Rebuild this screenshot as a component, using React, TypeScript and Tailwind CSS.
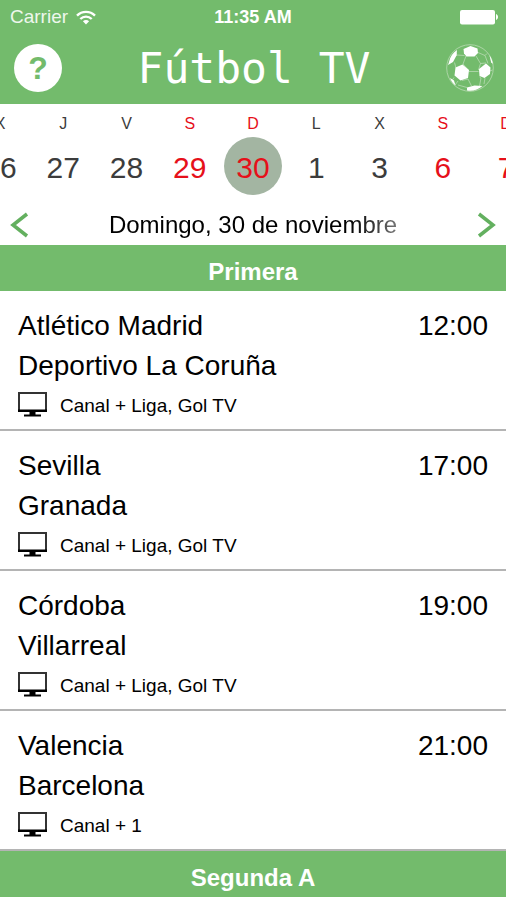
type Day = { letter: string; number: string; weekend?: boolean; selected?: boolean };

type Match = { home: string; away: string; time: string; channels: string };

const days: Day[] = [
  { letter: 'X', number: '26' },
  { letter: 'J', number: '27' },
  { letter: 'V', number: '28' },
  { letter: 'S', number: '29', weekend: true },
  { letter: 'D', number: '30', weekend: true, selected: true },
  { letter: 'L', number: '1' },
  { letter: 'X', number: '3' },
  { letter: 'S', number: '6', weekend: true },
  { letter: 'D', number: '7', weekend: true },
];

const matches: Match[] = [
  { home: 'Atlético Madrid', away: 'Deportivo La Coruña', time: '12:00', channels: 'Canal + Liga, Gol TV' },
  { home: 'Sevilla', away: 'Granada', time: '17:00', channels: 'Canal + Liga, Gol TV' },
  { home: 'Córdoba', away: 'Villarreal', time: '19:00', channels: 'Canal + Liga, Gol TV' },
  { home: 'Valencia', away: 'Barcelona', time: '21:00', channels: 'Canal + 1' },
];

function WifiIcon() {
  return (
    <svg viewBox="0 0 20 15" className="h-[15px] w-5" fill="none" stroke="currentColor" strokeWidth="2.4" aria-hidden="true">
      <path d="M1 5.6C6 .6 14 .6 19 5.6" />
      <path d="M4.3 9C7.6 5.8 12.4 5.8 15.7 9" />
      <path d="M10 14.4 6.9 11.3c1.8-1.6 4.4-1.6 6.2 0z" fill="currentColor" stroke="none" />
    </svg>
  );
}

function BatteryIcon() {
  return (
    <svg viewBox="0 0 40 16" className="h-4 w-10" fill="currentColor" aria-hidden="true">
      <rect x="2" y="1" width="35" height="14.5" rx="2" />
      <path d="M38 5c1.3.5 2 1.6 2 3s-.7 2.5-2 3z" />
    </svg>
  );
}

function BallIcon() {
  return (
    <svg viewBox="0 0 48 48" className="h-12 w-12" fill="none" stroke="#b9dab4" strokeWidth="0.8" aria-hidden="true">
      <circle cx="24" cy="24" r="23.3" />
      <path d="M20 12 17 20M30 12l4.500 7.500M17 20l5.500 6.500M34.500 19.500 32.500 26M22.500 27.500h10M10.500 11l8 .5M32 8.500l7 3M39 11.500 42 19.500M34.500 19.500 40 19M8.500 18.500 10 24M22 35l3.500 7M33.500 33l1.500 1-1.500 8M22 35l-6 1.500M39 34l-1 6M8 33.500 6 36.500M12 37l-3 4M12 41l9 2.500M44 27l2.500-1M10.500 9v3M41 9.500l-2 2" />
      <g fill="#fff" stroke="none">
        <path d="M17.500 5 24.500 2 31.500 4.500 32 9l-3.500 3.500h-8L18 9.500z" />
        <path d="M9.500 23.500 16.500 20.500 23 26l-1 8-7.500 2.500-6-5z" />
        <path d="M33 25 40 19.500l4.500 4-.5 6.500-5.500 4-5-2z" />
        <path d="M3 18C4 13 7 8.500 11 6l-.5 5.500-3.500 6.500L2 21z" />
        <path d="M4 34 8 36.500l1.500 5C7 39.500 5.200 37.200 4 34z" />
        <path d="m21 43.500 7.500-2 8 .5c-4.500 4-10 5.500-15.500 4.500z" />
        <path d="M43.500 11.500c2 2.800 3 5.500 3.300 8.500l-1.600-1.500z" />
      </g>
    </svg>
  );
}

function TvIcon() {
  return (
    <svg viewBox="0 0 30 26" className="h-[26px] w-[30px] shrink-0" aria-hidden="true">
      <path d="M1 2h27v18H1z" fill="none" stroke="#333" strokeWidth="2" />
      <path d="M0 18.5h29V21H17.500v2.500H23v2H6v-2h5.500V21H0z" fill="#000" />
    </svg>
  );
}

function Chevron({ d }: { d: string }) {
  return (
    <svg viewBox="0 0 20 26" className="h-[26px] w-5" fill="none" stroke="#63b05f" strokeWidth="3.5" aria-hidden="true">
      <path d={d} />
    </svg>
  );
}

function Header() {
  return (
    <header className="h-[104px] bg-[#73bb6c] text-white">
      <div className="grid h-8 grid-cols-3 items-center px-2 pt-0.5">
        <div className="flex items-center gap-2 pl-0.5">
          <span className="text-[19px] leading-6 text-[#eef7ed]">Carrier</span>
          <WifiIcon />
        </div>
        <span className="text-center text-lg leading-6 font-bold">11:35 AM</span>
        <div className="flex justify-end">
          <BatteryIcon />
        </div>
      </div>
      <div className="flex h-[72px] items-center justify-between pr-3 pl-3.5">
        <button
          type="button"
          aria-label="Ayuda"
          className="flex h-12 w-12 items-center justify-center rounded-full bg-white text-[32px] leading-none font-bold text-[#73bb6c]"
        >
          ?
        </button>
        <h1 className="font-['DejaVu_Sans_Mono',monospace] text-[43px] leading-none">Fútbol TV</h1>
        <button type="button" aria-label="Partidos">
          <BallIcon />
        </button>
      </div>
    </header>
  );
}

function DayStrip() {
  return (
    <div className="flex justify-center overflow-hidden pt-2.5">
      {days.map((day) => (
        <button
          key={day.number}
          type="button"
          aria-pressed={!!day.selected}
          className={`flex w-1/8 shrink-0 flex-col items-center gap-[3px] ${day.weekend ? 'text-[#e6101a]' : 'text-[#3c3c3c]'}`}
        >
          <span className="text-base leading-5">{day.letter}</span>
          <span
            className={`flex h-[58px] w-[58px] items-center justify-center rounded-full pt-1 text-[30px] leading-none ${
              day.selected ? 'bg-[#a3b5a2]' : ''
            }`}
          >
            {day.number}
          </span>
        </button>
      ))}
    </div>
  );
}

function DateBar() {
  return (
    <div className="flex h-[50px] items-center justify-between px-2.5 pt-2.5">
      <button type="button" aria-label="Día anterior">
        <Chevron d="M17 2 3 13l14 11" />
      </button>
      <h2 className="bg-linear-to-r from-black from-80% to-[#777] bg-clip-text text-2xl leading-8 text-transparent">
        Domingo, 30 de noviembre
      </h2>
      <button type="button" aria-label="Día siguiente">
        <Chevron d="m3 2 14 11L3 24" />
      </button>
    </div>
  );
}

function SectionTitle({ title }: { title: string }) {
  return (
    <h3 className="flex h-[46px] items-center justify-center bg-[#73bb6c] pt-2 text-2xl leading-8 font-bold text-white">
      {title}
    </h3>
  );
}

function MatchRow({ match }: { match: Match }) {
  return (
    <li className="border-b-2 border-[#b4b4b4] px-[18px] pt-[15px] pb-[7px]">
      <div className="flex justify-between text-[28px] leading-10">
        <span>{match.home}</span>
        <time>{match.time}</time>
      </div>
      <p className="text-[28px] leading-10">{match.away}</p>
      <div className="flex h-9 items-center gap-3">
        <TvIcon />
        <span className="pt-1 text-[19px] leading-7">{match.channels}</span>
      </div>
    </li>
  );
}

export default function App() {
  return (
    <main className="min-h-screen bg-white font-['Liberation_Sans',Arial,sans-serif] text-black">
      <Header />
      <DayStrip />
      <DateBar />
      <SectionTitle title="Primera" />
      <ul>
        {matches.map((match) => (
          <MatchRow key={match.home} match={match} />
        ))}
      </ul>
      <SectionTitle title="Segunda A" />
    </main>
  );
}
